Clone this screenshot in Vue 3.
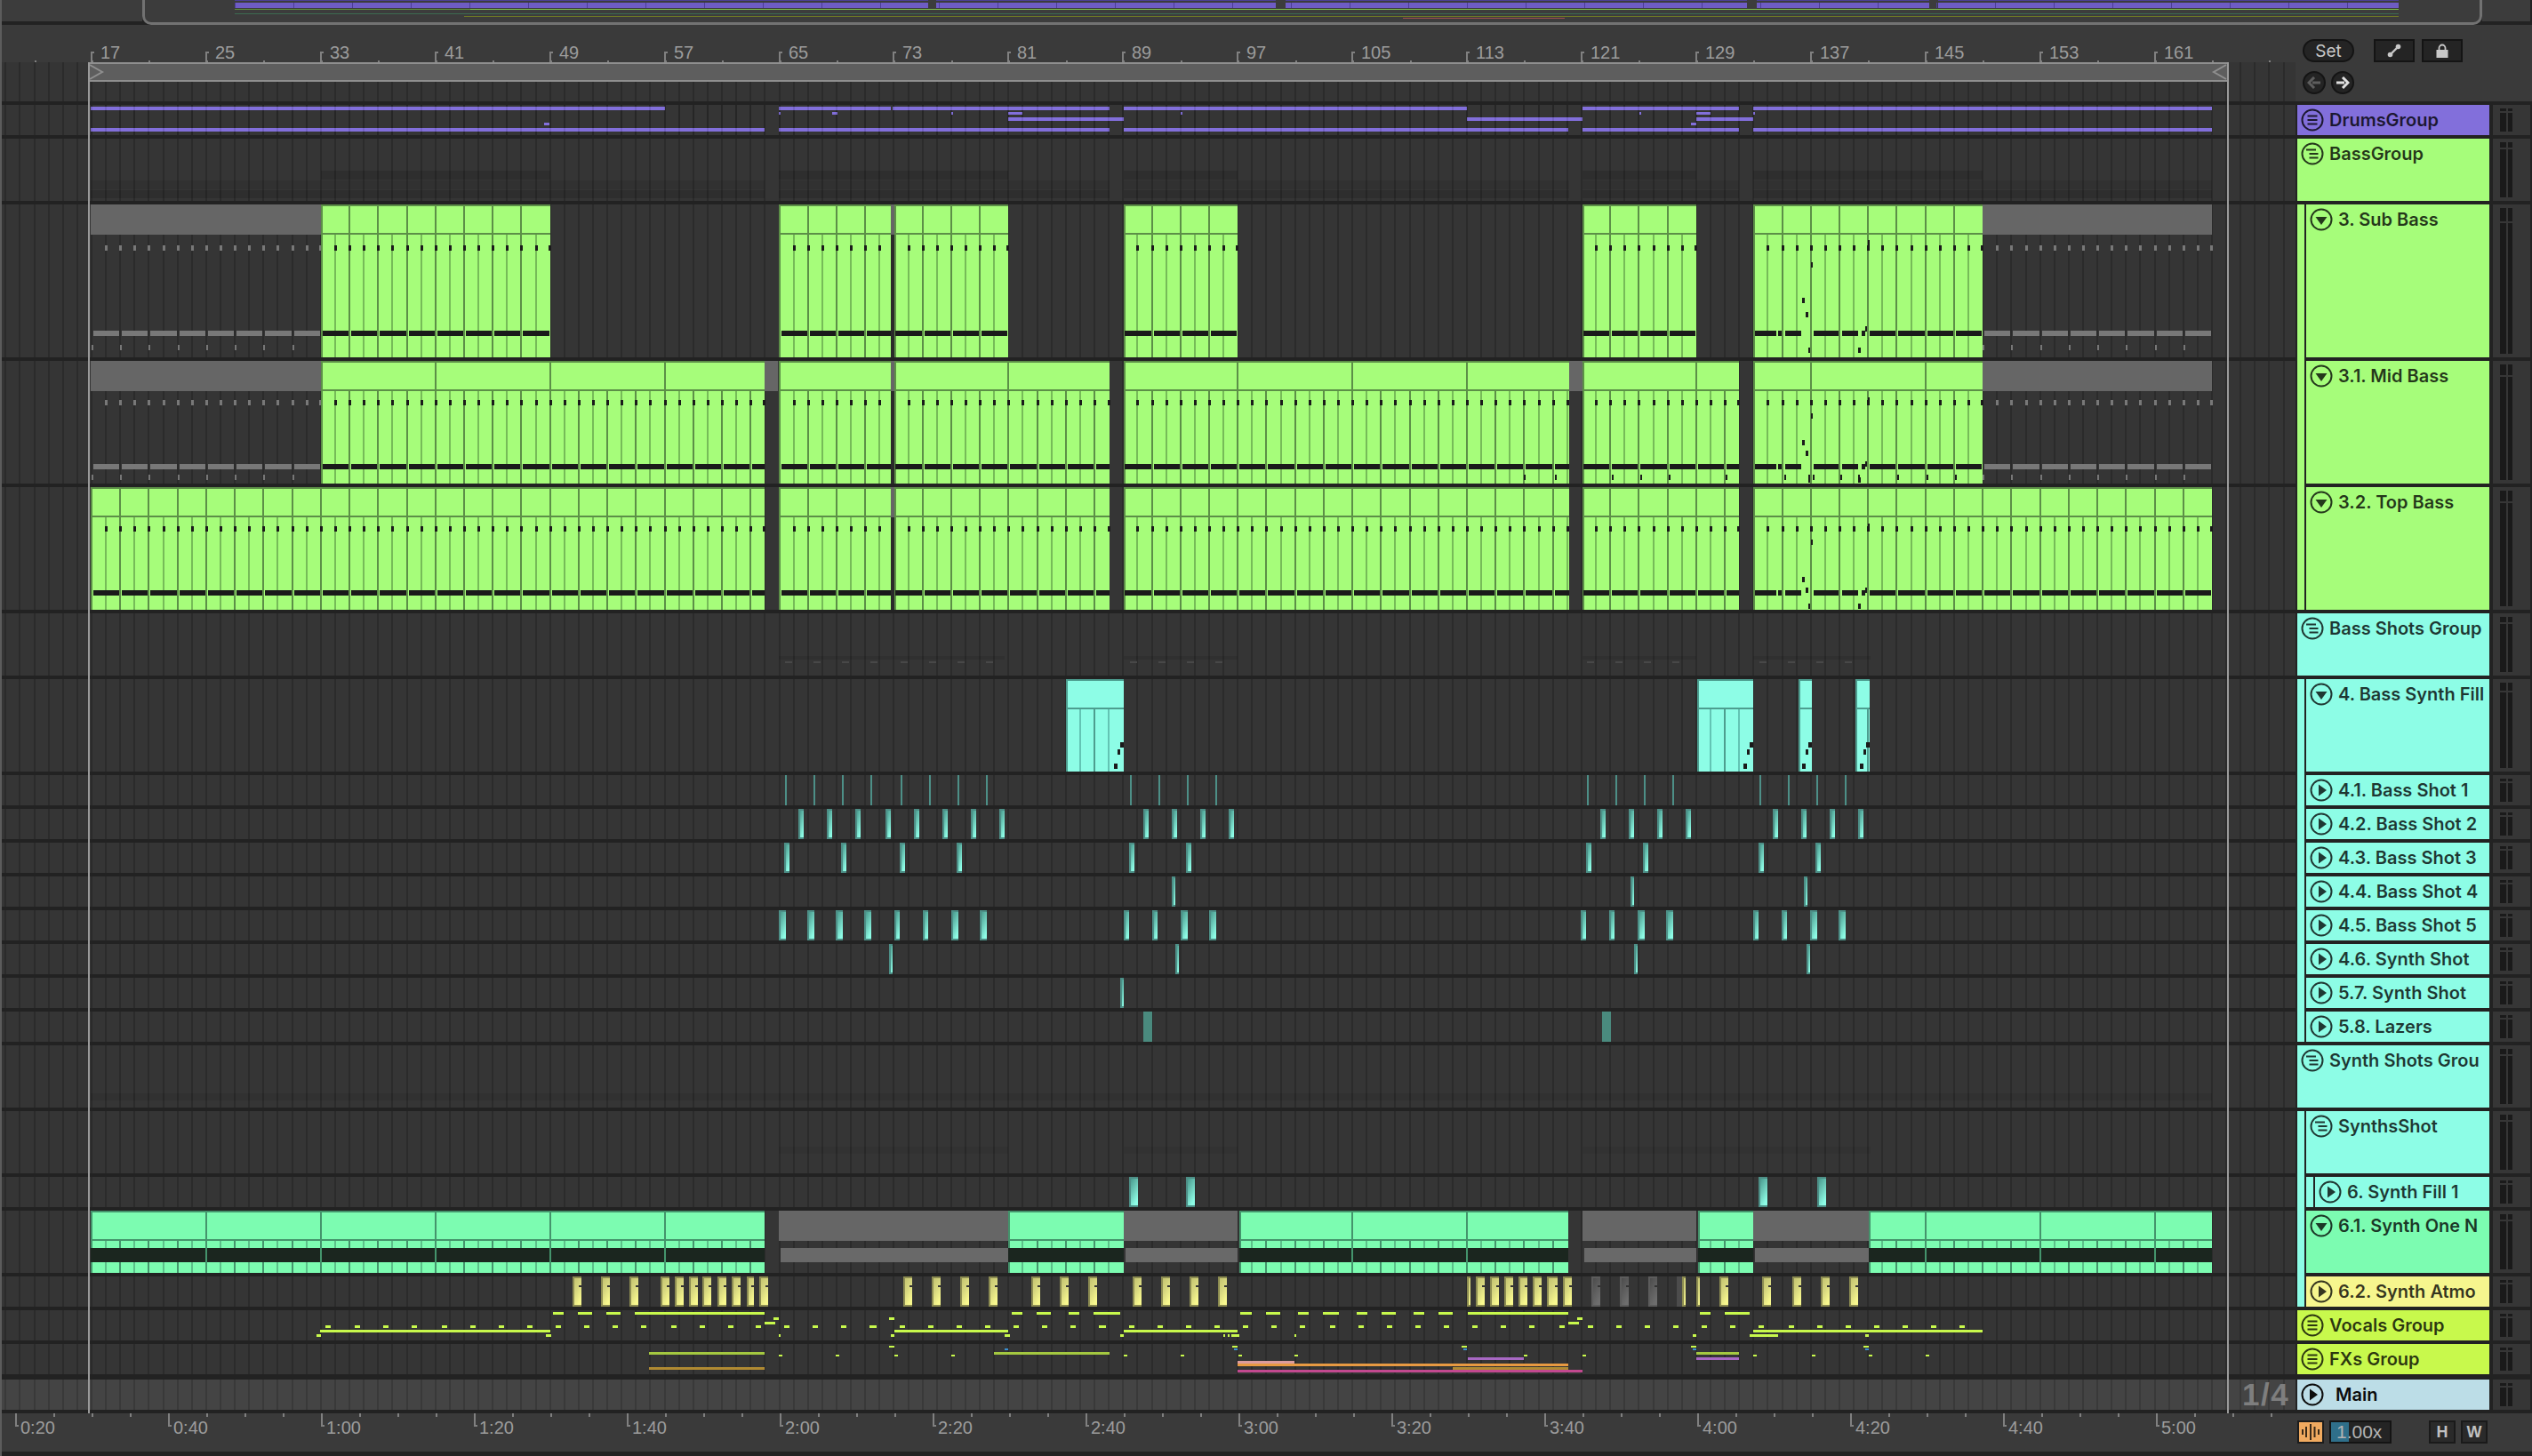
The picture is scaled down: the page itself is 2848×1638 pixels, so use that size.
<script setup>
// bar number -> page x
const L = (b) => Math.round(103 + (b - 17) * 16.115)
const DARK = '#1a1a1a'

const green = { fill: '#a6fd7a', dark: '#5c8f47', soft: '#76bb58', text: '#2a3a20' }
const cyan = { fill: '#8dfde6', dark: '#4d9d8f', soft: '#63c4b4' }
const mint = { fill: '#7cfcb1', dark: '#44946c', soft: '#5cc08a' }

function R(list, x, y, w, h, f) {
  list.push({ x, y, w, h, f })
}

function grid(h, color = '#2b2b2b') {
  const list = []
  for (let b = 11; b <= 170; b++) R(list, L(b) - 1, 0, 2, h, color)
  return list
}

function barsIn(x0, x1) {
  const out = []
  for (let b = 11; b <= 170; b++) {
    const x = L(b)
    if (x >= x0 - 2 && x < x1) out.push(b)
  }
  return out
}

function clip(a, x0, x1, h, pal, step) {
  const w = x1 - x0
  R(a, x0, 0, w, h, pal.fill)
  R(a, x0, 0, w, 2, pal.dark)
  R(a, x0, 0, 2, h, pal.dark)
  R(a, x0, 32, w, 2, pal.dark)
  for (const b of barsIn(x0 + 4, x1 - 1)) {
    const x = L(b)
    if ((b - 17) % step === 0) R(a, x - 1, 0, 2, 34, pal.dark)
    R(a, x - 1, 34, 2, h - 34, b % 2 ? pal.dark : pal.soft)
  }
}

// the bass lanes share one pattern of short ticks and a long low note
function bassNotes(a, x0, x1, lay, color) {
  for (const b of barsIn(x0 + 6, x1 + 1)) R(a, Math.min(L(b) - 1, x1 - 2), lay.tick, 3, 6, color)
  for (const b of barsIn(x0, x1)) {
    if (!(b % 2)) continue
    if (x0 === 1972 && L(b) < 2100) continue
    const s = L(b) + 2
    const e = Math.min(L(b + 2) - 1, x1)
    if (e > s) R(a, s, lay.long, e - s, 6, color)
  }
  if (x0 === 1972) {
    for (const [s, e] of [[1974, 1998], [2000, 2004], [2008, 2026], [2040, 2068], [2072, 2090], [2094, 2098]]) {
      R(a, s, lay.long, e - s, 6, color)
    }
    R(a, 2101, lay.extra[0], 2, 6, color)
    R(a, 2037, lay.extra[1], 2, 6, color)
    R(a, 2027, lay.extra[2], 3, 6, color)
    R(a, 2031, lay.extra[3], 3, 6, color)
    R(a, 2098, lay.extra[4], 2, 6, color)
    R(a, 2034, lay.extra[5], 2, 6, color)
    R(a, 2090, lay.extra[5], 3, 6, color)
  }
}

function grayLow(a, x0, x1, y) {
  for (const b of barsIn(x0, x1)) if (b % 2) R(a, L(b), y, 2, 6, '#777')
}

function bassLane(h, sections, gray, lay, step, lowTicks = []) {
  const a = grid(h)
  for (const [x0, x1] of gray) {
    R(a, x0, 0, x1 - x0, 34, '#666')
    bassNotes(a, x0, x1, lay, '#787878')
    grayLow(a, x0, x1, lay.low)
  }
  for (const [x0, x1] of sections) {
    clip(a, x0, x1, h, green, step)
    bassNotes(a, x0, x1, lay, DARK)
  }
  for (const x of lowTicks) R(a, x, lay.low, 2, 6, DARK)
  return a
}

function hit(a, x, w, h, grad, dim, notch) {
  R(a, x, 0, w, h, dim)
  R(a, x + 2, 2, w - 2, h - 4, grad)
  if (notch) R(a, x + w - 3, 10, 3, 2, '#333')
}

function slimLane(xs, color) {
  const a = grid(34)
  for (const [x, w] of xs) {
    if (color) R(a, x, 0, w, 34, color)
    else hit(a, x, w, 34, 'url(#hitCyan)', '#4d8f87')
  }
  return a
}

function faintGroup(rows) {
  const a = grid(70)
  for (const [y, h, o, segs] of rows) {
    for (const [s, e] of segs) R(a, s, y, e - s, h, `rgba(0,0,0,${o})`)
  }
  return a
}

const sections = [[102, 860], [876, 1248], [1264, 1765], [1780, 1956], [1972, 2488]]
const bassFaint = faintGroup([
  [36, 10, 0.12, [[361, 619], [876, 1134], [1264, 1392], [1780, 1908], [1972, 2230]]],
  [47, 10, 0.06, sections],
  [58, 9, 0.12, sections],
])

const shotsFaint = faintGroup([[48, 4, 0.08, [[876, 1130], [1264, 1392], [1780, 1908], [1972, 2104]]]])
for (const x of [883, 915, 947, 979, 1013, 1045, 1077, 1109, 1271, 1303, 1335, 1367, 1785, 1817, 1849, 1881, 1979, 2011, 2043, 2075]) {
  R(shotsFaint, x, 54, 8, 2, '#484848')
}
const synthFaint = faintGroup([[54, 8, 0.07, [[102, 2488]]]])
const synthsShotFaint = faintGroup([[40, 8, 0.05, [[876, 1134], [1264, 1392], [1780, 2104]]]])

const subLay = { tick: 46, long: 142, low: 158, extra: [40, 65, 105, 121, 137, 161] }
const midLay = { tick: 44, long: 116, low: 128, extra: [41, 59, 89, 101, 113, 131] }
const topLay = { tick: 44, long: 116, low: 128, extra: [41, 59, 101, 113, 113, 131] }

const subArt = bassLane(172, [[361, 619], [876, 1002], [1006, 1134], [1264, 1392], [1780, 1908], [1972, 2230]], [[102, 361], [2230, 2488]], subLay, 2)
R(subArt, 1002, 0, 4, 34, '#666')
R(subArt, 1002, 34, 4, 138, '#2a2a2a')

const midArt = bassLane(138, [[361, 860], [876, 1002], [1006, 1248], [1264, 1765], [1780, 1956], [1972, 2230]], [[102, 361], [2230, 2488]], midLay, 8,
  [1714, 1749, 1813, 1845, 1877, 1941, 2007, 2034, 2039, 2070, 2090, 2134, 2167, 2199])
for (const x of [860, 1002, 1765]) R(midArt, x, 0, x === 1002 ? 4 : 15, 34, '#666')
R(midArt, 1002, 34, 4, 104, '#2a2a2a')

const topArt = bassLane(138, [[102, 860], [876, 1002], [1006, 1248], [1264, 1765], [1780, 1956], [1972, 2488]], [], topLay, 2)
R(topArt, 1002, 0, 4, 34, '#666')
R(topArt, 1002, 34, 4, 104, '#2a2a2a')

const fillArt = grid(104)
for (const [x0, x1] of [[1199, 1264], [1909, 1972], [2023, 2038], [2087, 2103]]) {
  clip(fillArt, x0, x1, 104, cyan, 99)
  R(fillArt, x1 - 4, 71, 4, 6, DARK)
  R(fillArt, x1 - 7, 79, 3, 6, DARK)
  R(fillArt, x1 - 11, 95, 4, 6, DARK)
}

const rep = (list, base, w) => list.map((o) => [base + o, w])
const thin = [7, 39, 71, 103]
const shot1 = [...rep([...thin, 137, 169, 201, 233], 876, 2), ...rep(thin, 1264, 2), ...rep(thin, 1778, 2), ...rep(thin, 1972, 2)]
const shot2 = [...rep([22, 54, 86, 120, 152, 184, 216, 248], 876, 6), ...rep([22, 54, 86, 118], 1264, 6), ...rep([22, 54, 86, 118], 1778, 6), ...rep([22, 54, 86, 118], 1972, 6)]
const shot3 = [...rep([6, 70, 136, 200], 876, 6), ...rep([6, 70], 1264, 6), ...rep([6, 70], 1778, 6), ...rep([6, 70], 1972, 6)]
const shot4 = [[1318, 4], [1834, 4], [2029, 4]]
const shot5 = [...rep([0, 32, 64, 96], 876, 8), ...rep([130, 162], 876, 6), ...rep([194, 226], 876, 8), ...rep([0, 32], 1264, 6), ...rep([64, 96], 1264, 8), ...rep([0, 32], 1778, 6), ...rep([64, 96], 1778, 8), ...rep([0, 32], 1972, 6), ...rep([64, 96], 1972, 8)]

const fillOneArt = slimLane([[1270, 10], [1334, 10], [1978, 10], [2044, 10]])

// 6.1 has one dark band through the clip, and grey where it is switched off
const oneArt = grid(70)
for (const [x0, x1] of [[102, 860], [1134, 1264], [1394, 1764], [1910, 1972], [2102, 2488]]) {
  clip(oneArt, x0, x1, 70, mint, 8)
  R(oneArt, x0, 42, x1 - x0, 16, '#1b261f')
  for (const b of barsIn(x0 + 4, x1 - 1)) if ((b - 17) % 8 === 0) R(oneArt, L(b) - 1, 42, 2, 16, '#44946c')
}
for (const [x0, x1] of [[876, 1134], [1264, 1392], [1780, 1908], [1972, 2102]]) {
  R(oneArt, x0, 0, x1 - x0, 34, '#666')
  R(oneArt, x0 + 2, 42, x1 - x0 - 2, 16, '#696969')
}

const atmoArt = grid(34)
const atmo = [
  [644, 10], [676, 10], [708, 10], [743, 10], [759, 10], [775, 10], [790, 10], [807, 10], [823, 10], [840, 8], [854, 10],
  [1016, 10], [1048, 10], [1080, 10], [1112, 10], [1160, 10], [1192, 10], [1224, 10], [1274, 10], [1306, 10], [1338, 10], [1370, 10],
  [1650, 4], [1660, 10], [1676, 10], [1692, 10], [1708, 10], [1724, 10], [1740, 12], [1758, 10],
  [1892, 4], [1908, 4], [1934, 10], [1982, 10], [2016, 10], [2048, 10], [2080, 10],
]
for (const [x, w] of atmo) hit(atmoArt, x, w, 34, 'url(#hitYellow)', '#8c8c52', w >= 8)
for (const x of [1790, 1822, 1854]) hit(atmoArt, x, 10, 34, 'url(#hitGray)', '#5c5c5c', true)
R(atmoArt, 1886, 0, 6, 34, '#4c4c4c')

const LIME = '#c8f94c'
const voxArt = grid(34)
const vox = [
  // y, height, segments
  [2, 3, [[622, 634], [650, 666], [682, 698], [714, 860], [1138, 1150], [1166, 1182], [1202, 1214], [1230, 1260],
    [1395, 1408], [1424, 1440], [1460, 1472], [1488, 1506], [1526, 1538], [1554, 1570], [1590, 1602], [1618, 1634], [1651, 1764],
    [1912, 1924], [1940, 1968]]],
  [8, 3, [[870, 876], [1000, 1006], [1774, 1780]]],
  [13, 3, [[860, 872], [1764, 1776]]],
  [17, 3, [[366, 372], [399, 405], [431, 437], [463, 469], [497, 503], [529, 535], [561, 567], [593, 599], [625, 631], [657, 663],
    [689, 695], [721, 727], [755, 761], [787, 793], [819, 825], [850, 856], [882, 888], [914, 920], [946, 952], [978, 986], [1012, 1018],
    [1044, 1050], [1076, 1082], [1108, 1114], [1140, 1146], [1172, 1178], [1204, 1210], [1236, 1244], [1270, 1276], [1302, 1308], [1334, 1340],
    [1366, 1372], [1398, 1404], [1430, 1436], [1462, 1468], [1496, 1502], [1528, 1534], [1560, 1566], [1592, 1598], [1624, 1630], [1656, 1662],
    [1688, 1694], [1720, 1726], [1754, 1760], [1786, 1792], [1818, 1824], [1850, 1856], [1882, 1888], [1914, 1920], [1946, 1952], [1978, 1984],
    [2012, 2018], [2044, 2050], [2076, 2082], [2108, 2114], [2140, 2146], [2172, 2178], [2204, 2210]]],
  [22, 3, [[360, 619], [1006, 1134], [1264, 1392], [1972, 2230]]],
  [27, 3, [[356, 361], [614, 620], [876, 878], [1002, 1006], [1130, 1136], [1260, 1264], [1376, 1378], [1381, 1383], [1385, 1394], [1456, 1458], [1904, 1908], [1968, 2000], [2098, 2102]]],
]
for (const [y, h, segs] of vox) for (const [s, e] of segs) R(voxArt, s, y, e - s, h, LIME)

const fxArt = grid(34)
const fx = [
  [2, 2, LIME, [[1000, 1006], [1386, 1392], [1644, 1650], [1902, 1908], [2096, 2102]]],
  [5, 2, '#3a8fd0', [[1130, 1134], [1388, 1392], [1646, 1650], [1904, 1908], [2098, 2102]]],
  [9, 3, '#a4c840', [[730, 860], [1118, 1248], [1908, 1956]]],
  [12, 2, LIME, [[876, 880], [940, 944], [1006, 1010], [1070, 1074], [1264, 1268], [1328, 1332], [1393, 1397], [1456, 1460], [1714, 1718], [1780, 1784], [1972, 1976], [2038, 2042], [2102, 2106], [2166, 2170]]],
  [15, 3, '#a868c4', [[1651, 1714], [1908, 1956]]],
  [19, 3, '#dc9c9c', [[1392, 1456]]],
  [22, 3, '#e89a42', [[1392, 1764]]],
  [26, 3, '#b08a32', [[730, 860], [1634, 1764]]],
  [29, 3, '#c2498f', [[1392, 1780]]],
]
for (const [y, h, c, segs] of fx) for (const [s, e] of segs) R(fxArt, s, y, e - s, h, c)

const drumArt = grid(34)
const PURPLE = '#826fdb'
const drums = [
  [2, 4, [[102, 748], [876, 1002], [1004, 1248], [1264, 1650], [1780, 1956], [1972, 2488]]],
  [8, 3, [[876, 878], [936, 942], [1070, 1072], [1134, 1150], [1328, 1330], [1844, 1846], [1908, 1924], [1972, 1974]]],
  [14, 4, [[1134, 1264], [1650, 1780], [1908, 1972]]],
  [20, 3, [[612, 618], [1902, 1908]]],
  [26, 4, [[102, 860], [876, 1248], [1264, 1764], [1780, 1956], [1972, 2488]]],
]
for (const [y, h, segs] of drums) for (const [s, e] of segs) R(drumArt, s, y, e - s, h, PURPLE)
for (let b = 17; b <= 164; b++) R(drumArt, L(b) - 1, 0, 2, 34, 'rgba(0,0,0,0.1)')

const GB = '#a6fd7a'
const tracks = [
  { name: 'DrumsGroup', h: 34, color: PURPLE, icon: 'closed', art: drumArt },
  { name: 'BassGroup', h: 70, color: GB, icon: 'open', art: bassFaint },
  { name: '3. Sub Bass', h: 172, color: GB, icon: 'down', strips: [[GB, 1]], art: subArt },
  { name: '3.1. Mid Bass', h: 138, color: GB, icon: 'down', strips: [[GB, 1]], art: midArt },
  { name: '3.2. Top Bass', h: 138, color: GB, icon: 'down', strips: [[GB, 0]], art: topArt },
  { name: 'Bass Shots Group', h: 70, color: '#8dfde6', icon: 'open', art: shotsFaint },
  { name: '4. Bass Synth Fill', h: 104, color: '#8dfde6', icon: 'down', strips: [['#8dfde6', 1]], art: fillArt },
  { name: '4.1. Bass Shot 1', h: 34, color: '#8dfde6', icon: 'right', strips: [['#8dfde6', 1]], art: slimLane(shot1, '#4d8f87') },
  { name: '4.2. Bass Shot 2', h: 34, color: '#8dfde6', icon: 'right', strips: [['#8dfde6', 1]], art: slimLane(shot2) },
  { name: '4.3. Bass Shot 3', h: 34, color: '#8dfde6', icon: 'right', strips: [['#8dfde6', 1]], art: slimLane(shot3) },
  { name: '4.4. Bass Shot 4', h: 34, color: '#8dfde6', icon: 'right', strips: [['#8dfde6', 1]], art: slimLane(shot4) },
  { name: '4.5. Bass Shot 5', h: 34, color: '#8dfde6', icon: 'right', strips: [['#8dfde6', 1]], art: slimLane(shot5) },
  { name: '4.6. Synth Shot', h: 34, color: '#8dfde6', icon: 'right', strips: [['#8dfde6', 1]], art: slimLane([[1000, 4], [1322, 4], [1838, 4], [2032, 4]]) },
  { name: '5.7. Synth Shot', h: 34, color: '#8dfde6', icon: 'right', strips: [['#8dfde6', 1]], art: slimLane([[1260, 4]]) },
  { name: '5.8. Lazers', h: 34, color: '#8dfde6', icon: 'right', strips: [['#8dfde6', 0]], art: slimLane([[1286, 10], [1802, 10]], '#4a8a7e') },
  { name: 'Synth Shots Grou', h: 70, color: '#8dfde6', icon: 'open', art: synthFaint },
  { name: 'SynthsShot', h: 70, color: '#8dfde6', icon: 'open', strips: [['#8dfde6', 1]], art: synthsShotFaint },
  { name: '6. Synth Fill 1', h: 34, color: '#8dfde6', icon: 'right', strips: [['#8dfde6', 1], ['#8dfde6', 0]], art: fillOneArt },
  { name: '6.1. Synth One N', h: 70, color: '#7cfcb1', icon: 'down', strips: [['#8dfde6', 1]], art: oneArt },
  { name: '6.2. Synth Atmo', h: 34, color: '#f6f68e', icon: 'right', strips: [['#8dfde6', 0]], art: atmoArt },
  { name: 'Vocals Group', h: 34, color: '#c8f94c', icon: 'closed', art: voxArt },
  { name: 'FXs Group', h: 34, color: '#c8f94c', icon: 'closed', art: fxArt },
  { name: 'Main', h: 34, color: '#bcdde7', icon: 'right', main: true, art: grid(34, '#393939') },
]

// ruler above the lanes
const beatTicks = []
const beats = []
for (let b = 13; b <= 169; b += 4) R(beatTicks, L(b), 40, 2, 2, '#808080')
for (let b = 17; b <= 161; b += 8) {
  R(beatTicks, L(b) - 1, 30, 2, 12, '#808080')
  R(beatTicks, L(b) - 1, 30, 4, 2, '#808080')
  beats.push({ label: b, x: L(b) + 10 })
}

// time ruler below the lanes
const timeTicks = []
const times = []
for (let k = 0; k <= 14; k++) {
  const x = 17 + 172 * k
  R(timeTicks, x, 0, 2, 15, '#808080')
  R(timeTicks, x, 13, 4, 2, '#808080')
  const s = 20 + 20 * k
  times.push({ label: `${Math.floor(s / 60)}:${String(s % 60).padStart(2, '0')}`, x: x + 6 })
  for (let i = 1; i < 4; i++) R(timeTicks, x + 43 * i, 0, 2, 4, '#808080')
}

const loopArt = grid(44)
R(loopArt, 100, 0, 2405, 22, '#5e5e5e')
R(loopArt, 100, 0, 2405, 2, '#8f8f8f')
R(loopArt, 100, 20, 2405, 2, '#8f8f8f')

const overviewArt = []
for (const [s, e] of [[264, 1044], [1053, 1435], [1446, 1965], [1976, 2170], [2180, 2698]]) {
  R(overviewArt, s, 0, e - s, 1, '#4c3f96')
  R(overviewArt, s, 3, e - s, 6, '#6e5cc4')
}
for (let x = 264; x < 2698; x += 66) R(overviewArt, x, 3, 1, 6, '#4c3f96')
R(overviewArt, 264, 10, 265, 1, '#5f8f3f')
R(overviewArt, 529, 10, 2169, 1, '#7fbf4f')
R(overviewArt, 264, 15, 2434, 1, '#3c6a50')
R(overviewArt, 522, 18, 2176, 1, '#6f7a25')
R(overviewArt, 1578, 20, 182, 1, '#a05050')
</script>

<template>
  <div class="daw">
    <svg class="defs" width="0" height="0" aria-hidden="true">
      <defs>
        <linearGradient id="hitCyan" x1="0" y1="0" x2="0.5" y2="1">
          <stop offset="0" stop-color="#4a9a8e" />
          <stop offset="0.5" stop-color="#6cc9b8" />
          <stop offset="1" stop-color="#8dfde6" />
        </linearGradient>
        <linearGradient id="hitYellow" x1="0" y1="0" x2="0.5" y2="1">
          <stop offset="0" stop-color="#c4c470" />
          <stop offset="0.5" stop-color="#d8d880" />
          <stop offset="1" stop-color="#f8f88e" />
        </linearGradient>
        <linearGradient id="hitGray" x1="0" y1="0" x2="0.5" y2="1">
          <stop offset="0" stop-color="#4c4c4c" />
          <stop offset="1" stop-color="#6e6e6e" />
        </linearGradient>
      </defs>
    </svg>

    <div class="overview">
      <div class="ov-side ov-left"></div>
      <div class="ov-frame">
        <svg class="art" width="2626" height="25" viewBox="163 0 2626 25" shape-rendering="crispEdges">
          <rect v-for="(r, i) in overviewArt" :key="i" :x="r.x" :y="r.y" :width="r.w" :height="r.h" :fill="r.f" />
        </svg>
      </div>
      <div class="ov-side ov-right"></div>
    </div>

    <div class="top">
      <div class="top-main">
        <div class="ruler">
          <svg class="art over" width="2580" height="42" viewBox="2 0 2580 42" shape-rendering="crispEdges">
            <rect v-for="(r, i) in beatTicks" :key="i" :x="r.x" :y="r.y" :width="r.w" :height="r.h" :fill="r.f" />
          </svg>
          <span v-for="b in beats" :key="b.label" class="ruler-label beat" :style="{ left: b.x - 2 + 'px' }">{{ b.label }}</span>
        </div>
        <svg class="art lane" width="2580" height="44" viewBox="2 0 2580 44" shape-rendering="crispEdges">
          <rect v-for="(r, i) in loopArt" :key="i" :x="r.x" :y="r.y" :width="r.w" :height="r.h" :fill="r.f" />
          <polyline points="101,3 115,11 101,19" fill="none" stroke="#8f8f8f" stroke-width="2" shape-rendering="auto" />
          <polyline points="2504,3 2490,11 2504,19" fill="none" stroke="#8f8f8f" stroke-width="2" shape-rendering="auto" />
        </svg>
      </div>
      <div class="panel">
        <div class="panel-row">
          <button class="set">Set</button>
          <button class="square first">
            <svg width="16" height="16" viewBox="0 0 16 16">
              <path d="M3 13 13 3" stroke="#c8c8c8" stroke-width="2.4" />
              <circle cx="3.5" cy="12.5" r="2.8" fill="#c8c8c8" />
              <circle cx="12.5" cy="3.5" r="2.8" fill="#c8c8c8" />
            </svg>
          </button>
          <button class="square">
            <svg width="16" height="16" viewBox="0 0 16 16">
              <path d="M4.5 7V5a3.5 3.5 0 0 1 7 0v2" fill="none" stroke="#c8c8c8" stroke-width="1.8" />
              <rect x="1.5" y="7" width="13" height="9" fill="#c8c8c8" />
            </svg>
          </button>
        </div>
        <div class="panel-row nav">
          <button class="round">
            <svg width="16" height="14" viewBox="0 0 16 14"><path d="M15 7H6M8 1 2 7l6 6" fill="none" stroke="#5e5e5e" stroke-width="3" /></svg>
          </button>
          <button class="round">
            <svg width="16" height="14" viewBox="0 0 16 14"><path d="M1 7h9M8 1l6 6-6 6" fill="none" stroke="#e0e0e0" stroke-width="3" /></svg>
          </button>
        </div>
      </div>
    </div>

    <div class="tracks">
      <div v-for="t in tracks" :key="t.name" class="row" :class="{ 'row-main': t.main }">
        <svg class="art lane" width="2580" :height="t.h" :viewBox="`2 0 2580 ${t.h}`" shape-rendering="crispEdges">
          <rect v-for="(r, i) in t.art" :key="i" :x="r.x" :y="r.y" :width="r.w" :height="r.h" :fill="r.f" />
        </svg>
        <span v-if="t.main" class="grid-hint">1/4</span>
        <div class="head" :style="{ height: t.h + 'px' }">
          <div
            v-for="(s, i) in t.strips || []"
            :key="i"
            class="strip"
            :class="{ cont: s[1] }"
            :style="{ background: s[0] }"
          ></div>
          <div class="title" :class="{ 'title-main': t.main }" :style="{ background: t.color }">
            <svg class="track-icon" width="26" height="26" viewBox="0 0 26 26" fill="none">
              <circle cx="13" cy="13" r="11.5" stroke="currentColor" stroke-width="2" />
              <path v-if="t.icon === 'closed'" d="M7.5 8.5h11M7.5 13h11M7.5 17.5h11" stroke="currentColor" stroke-width="2" />
              <path v-if="t.icon === 'open'" d="M6 8.5h11M9.5 13h10M9.5 17.5h10" stroke="currentColor" stroke-width="2" />
              <path v-if="t.icon === 'down'" d="M6.5 10h13L13 19z" fill="currentColor" />
              <path v-if="t.icon === 'right'" d="M10 6.5v13L19 13z" fill="currentColor" />
            </svg>
            <span class="track-name">{{ t.name }}</span>
          </div>
        </div>
        <div class="meter">
          <div class="meter-bar wide" :style="{ '--peak': Math.round(t.h * 0.09) + 'px' }"></div>
          <div class="meter-bar" :style="{ '--peak': Math.round(t.h * 0.09) + 'px' }"></div>
        </div>
      </div>
    </div>

    <div class="bottom">
      <div class="ruler time">
        <svg class="art over" width="2580" height="43" viewBox="2 0 2580 43" shape-rendering="crispEdges">
          <rect v-for="(r, i) in timeTicks" :key="i" :x="r.x" :y="r.y" :width="r.w" :height="r.h" :fill="r.f" />
        </svg>
        <span v-for="l in times" :key="l.label" class="ruler-label clock" :style="{ left: l.x - 2 + 'px' }">{{ l.label }}</span>
      </div>
      <div class="bottom-panel">
        <button class="wave">
          <svg width="22" height="20" viewBox="0 0 22 20">
            <path d="M2 7v6M6 4v12M11 1v18M15.5 4v12M20 7v6" stroke="#3a2a18" stroke-width="2" fill="none" />
          </svg>
        </button>
        <div class="zoom-field"><span class="zoom-fill"></span><span class="zoom-text">1.00x</span></div>
        <button class="small first-small">H</button>
        <button class="small">W</button>
      </div>
    </div>

    <div class="loop-line loop-start"></div>
    <div class="loop-line loop-end"></div>
  </div>
</template>

<style scoped>
.daw {
  position: relative;
  width: 2846px;
  height: 1638px;
  overflow: hidden;
  background: #222;
  border-left: 2px solid #5c5c5c;
  font-family: 'Liberation Sans', Arial, sans-serif;
}
.defs {
  position: absolute;
}
.art {
  display: block;
  flex: none;
}

/* overview strip */
.overview {
  display: flex;
  height: 28px;
}
.ov-side {
  background: #3c3c3c;
  border-bottom: 4px solid #222;
}
.ov-left {
  width: 158px;
}
.ov-right {
  width: 54px;
}
.ov-frame {
  width: 2632px;
  box-sizing: border-box;
  background: #3c3c3c;
  border: 3px solid #727272;
  border-top: none;
  border-radius: 0 0 10px 10px;
  overflow: hidden;
}

/* top: rulers + view controls */
.top {
  display: flex;
  height: 86px;
}
.top-main {
  width: 2580px;
}
.ruler {
  position: relative;
  width: 2580px;
  height: 42px;
  background: #3a3a3a;
}
.over {
  position: absolute;
  left: 0;
  top: 0;
}
.ruler-label {
  position: absolute;
  font-size: 20px;
  line-height: 20px;
  color: #9c9c9c;
  white-space: nowrap;
}
.beat {
  top: 21px;
}
.clock {
  top: 6px;
}
.lane {
  background: #353535;
}
.panel {
  flex: 1;
  box-sizing: border-box;
  padding: 16px 0 0 8px;
  background: #3a3a3a;
}
.panel-row {
  display: flex;
  align-items: center;
}
.panel button {
  padding: 0;
  box-sizing: border-box;
  display: flex;
  align-items: center;
  justify-content: center;
}
.nav {
  gap: 6px;
  margin-top: 10px;
}
.set {
  width: 58px;
  height: 26px;
  font-family: Inter, sans-serif;
  font-size: 19px;
  color: #c8c8c8;
  background: #242424;
  border: 2px solid #141414;
  border-radius: 13px;
}
.square {
  width: 46px;
  height: 26px;
  margin-left: 8px;
  background: #242424;
  border: 2px solid #141414;
}
.first {
  margin-left: 22px;
}
.round {
  width: 26px;
  height: 26px;
  border-radius: 50%;
  background: #242424;
  border: 2px solid #141414;
}

/* tracks */
.tracks {
  display: flex;
  flex-direction: column;
  gap: 4px;
  margin-top: 4px;
}
.row {
  position: relative;
  display: flex;
  align-items: stretch;
}
.row-main {
  margin-top: 2px;
}
.row-main .lane {
  background: #444;
}
.grid-hint {
  position: absolute;
  left: 2520px;
  top: 0;
  font-size: 35px;
  letter-spacing: 1.5px;
  line-height: 34px;
  font-weight: 700;
  color: #7e7e7e;
}
.head {
  display: flex;
  width: 216px;
  margin-left: 2px;
}
.strip {
  position: relative;
  flex: none;
  width: 8px;
  margin-right: 2px;
}
.cont {
  height: calc(100% + 4px);
}
.title {
  flex: 1;
  min-width: 0;
  display: flex;
  align-items: flex-start;
  overflow: hidden;
  padding: 4px 0 0 4px;
  box-sizing: border-box;
  color: rgba(0, 0, 0, 0.78);
}
.title-main {
  color: #0c0c0c;
}
.track-icon {
  flex: none;
}
.track-name {
  margin-left: 6px;
  font-family: Inter, sans-serif;
  font-size: 20px;
  font-weight: 600;
  line-height: 26px;
  white-space: nowrap;
}
.title-main .track-name {
  margin-left: 13px;
}
.meter {
  display: flex;
  gap: 2px;
  width: 42px;
  margin-left: 4px;
  padding: 4px 20px 4px 8px;
  box-sizing: border-box;
  background: #363636;
}
.meter-bar {
  width: 5px;
  background: linear-gradient(
    #1a1a1a var(--peak),
    transparent var(--peak),
    transparent calc(var(--peak) + 2px),
    #1a1a1a calc(var(--peak) + 2px)
  );
}
.meter-bar.wide {
  width: 7px;
}

/* bottom: time ruler + tools */
.bottom {
  display: flex;
  height: 43px;
  margin-top: 4px;
}
.time {
  height: 43px;
}
.bottom-panel {
  flex: 1;
  display: flex;
  align-items: flex-start;
  box-sizing: border-box;
  padding: 8px 0 0 2px;
  background: #3a3a3a;
}
.bottom-panel button {
  padding: 0;
  box-sizing: border-box;
}
.wave {
  width: 30px;
  height: 26px;
  display: flex;
  align-items: center;
  justify-content: center;
  background: #f0aa60;
  border: 2px solid #1c1c1c;
}
.zoom-field {
  position: relative;
  width: 70px;
  height: 26px;
  margin-left: 6px;
  box-sizing: border-box;
  background: #242424;
  border: 2px solid #141414;
}
.zoom-fill {
  position: absolute;
  left: 0;
  top: 0;
  bottom: 0;
  width: 20px;
  background: #2f6f8a;
}
.zoom-text {
  position: absolute;
  left: 6px;
  top: 0;
  font-size: 21px;
  line-height: 22px;
  color: #b4b4b4;
}
.small {
  width: 30px;
  height: 26px;
  margin-left: 6px;
  font-family: 'Liberation Sans', sans-serif;
  font-size: 18px;
  font-weight: 700;
  color: #c0c0c0;
  background: #2a2a2a;
  border: 2px solid #1a1a1a;
}
.first-small {
  margin-left: 42px;
}

/* loop brace edges run across all lanes */
.loop-line {
  position: absolute;
  top: 70px;
  width: 2px;
  height: 1520px;
  background: #9a9a9a;
}
.loop-start {
  left: 97px;
}
.loop-end {
  left: 2503px;
}
</style>

<style>
html,
body {
  margin: 0;
  background: #222;
}
</style>
